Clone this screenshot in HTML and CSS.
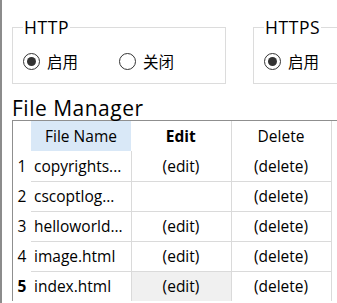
FILE: index.html
```html
<!DOCTYPE html>
<html>
<head>
<meta charset="utf-8">
<link rel="stylesheet" href="styles.css">
</head>
<body>
<div class="page">
  <div class="groups">
    <fieldset class="group">
      <legend>HTTP</legend>
      <div class="radios">
        <label class="radio"><span class="dot checked"></span>启用</label>
        <label class="radio"><span class="dot"></span>关闭</label>
      </div>
    </fieldset>
    <fieldset class="group">
      <legend>HTTPS</legend>
      <div class="radios">
        <label class="radio"><span class="dot checked"></span>启用</label>
      </div>
    </fieldset>
  </div>
  <h1 class="title">File Manager</h1>
  <div class="grid">
    <table>
      <thead>
        <tr>
          <th class="rh"></th>
          <th class="col sel">File Name</th>
          <th class="col bold">Edit</th>
          <th class="col">Delete</th>
        </tr>
      </thead>
      <tbody>
        <tr><td class="rh">1</td><td class="name">copyrights...</td><td class="c">(edit)</td><td class="c">(delete)</td></tr>
        <tr><td class="rh">2</td><td class="name">cscoptlog...</td><td class="c"></td><td class="c">(delete)</td></tr>
        <tr><td class="rh">3</td><td class="name">helloworld...</td><td class="c">(edit)</td><td class="c">(delete)</td></tr>
        <tr><td class="rh">4</td><td class="name">image.html</td><td class="c">(edit)</td><td class="c">(delete)</td></tr>
        <tr class="current"><td class="rh">5</td><td class="name">index.html</td><td class="c cur">(edit)</td><td class="c">(delete)</td></tr>
      </tbody>
    </table>
  </div>
</div>
</body>
</html>
```
FILE: styles.css
```css
html, body {
  margin: 0;
  padding: 0;
  background: #fff;
  overflow: hidden;
}
body {
  font-family: "Open Sans", "Noto Sans CJK SC", sans-serif;
  color: #000;
  width: 337px;
  height: 303px;
}
.page {
  border-left: 2px solid #8c8c8c;
  height: 303px;
  padding-left: 10px;
  box-sizing: border-box;
  overflow: hidden;
}
.groups {
  display: flex;
  gap: 27px;
  padding-top: 16px;
  width: 325px;
  overflow: hidden;
}
.group {
  margin: 0;
  border: 1px solid #dcdcdc;
  padding: 0 10px 0 10px;
  width: 211px;
  height: 68px;
  box-sizing: border-box;
  flex: none;
}
.group legend {
  font-size: 17.5px;
  line-height: 23px;
  padding: 0 1px;
  margin-left: 0;
  letter-spacing: 0.6px;
}
.radios {
  display: flex;
  gap: 0;
  padding-top: 12px;
}
.radio {
  display: flex;
  align-items: center;
  font-family: "Noto Sans CJK SC", sans-serif;
  font-size: 15.5px;
  line-height: 20px;
  width: 96px;
}
.dot {
  width: 17px;
  height: 17px;
  box-sizing: border-box;
  border: 1.5px solid #333;
  border-radius: 50%;
  margin-right: 7px;
  display: flex;
  align-items: center;
  justify-content: center;
}
.dot.checked::after {
  content: "";
  width: 9px;
  height: 9px;
  border-radius: 50%;
  background: #333;
}
.title {
  margin: 12px 0 0 0;
  font-weight: normal;
  font-size: 21px;
  line-height: 24px;
  letter-spacing: 0.5px;
  height: 24px;
}
.grid {
  border-top: 1px solid #8f8f8f;
  border-left: 1px solid #8f8f8f;
  height: 181px;
  width: 325px;
  box-sizing: border-box;
  overflow: hidden;
}
table {
  border-collapse: collapse;
  font-size: 15.5px;
}
th, td {
  padding: 0;
  box-sizing: border-box;
}
th {
  font-weight: normal;
  height: 30px;
}
th.bold {
  font-weight: bold;
}
.rh {
  width: 18px;
  min-width: 18px;
  text-align: center;
  border: none;
}
th.col {
  width: 100px;
  min-width: 100px;
  border-right: 1px solid #dadada;
  text-align: center;
}
th.sel {
  background: #d9e8f7;
  border-right: none;
}
td.name, td.c {
  border-right: 1px solid #dadada;
  border-bottom: 1px solid #dadada;
  height: 30px;
}
td.name {
  padding-left: 3px;
  text-align: left;
  white-space: nowrap;
}
td.c {
  text-align: center;
  white-space: nowrap;
}
td.rh {
  height: 30px;
}
tr.current td.rh {
  font-weight: bold;
}
td.cur {
  background: #f0f0f0;
}
```
